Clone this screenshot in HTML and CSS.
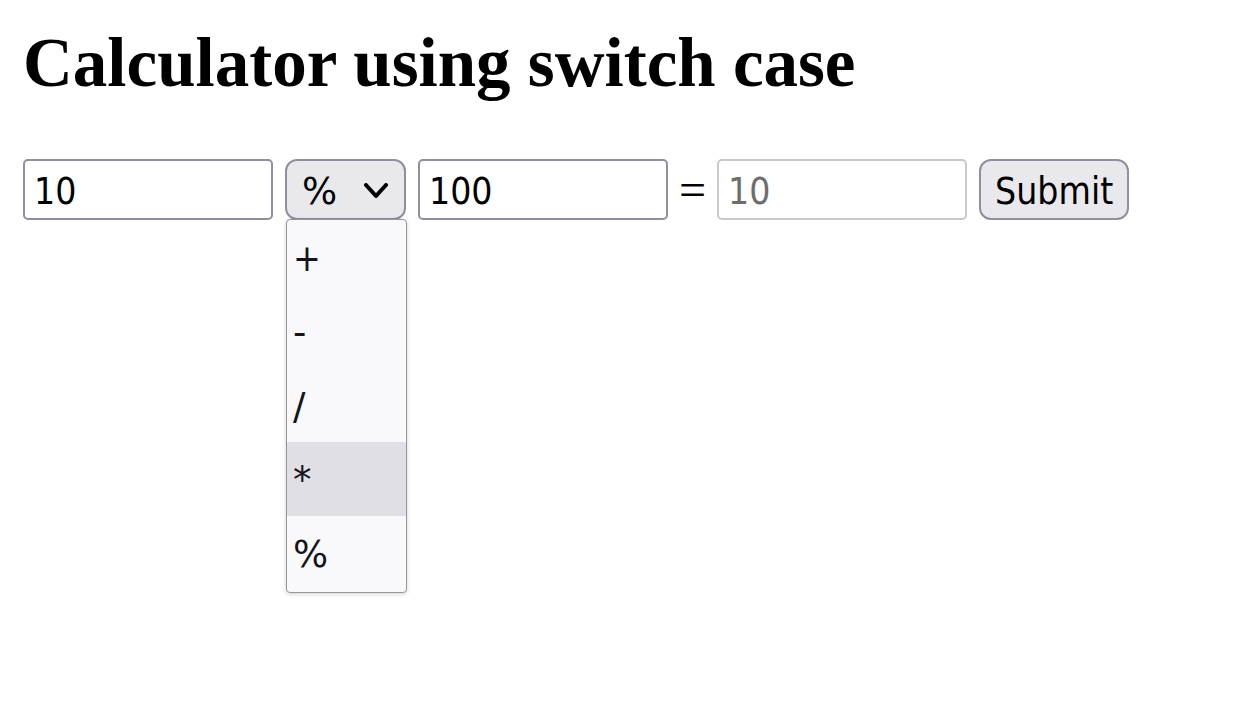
FILE: index.html
```
<!DOCTYPE html>
<html lang="en">
<head>
<meta charset="utf-8">
<title>Calculator using switch case</title>
<link rel="stylesheet" href="styles.css">
</head>
<body>
<h1 class="title">Calculator using switch case</h1>
<form class="calculator">
  <input class="field" type="text" value="10" aria-label="First number">
  <div class="operator">
    <select class="operator-select" aria-label="Operator">
      <option>+</option>
      <option>-</option>
      <option>/</option>
      <option>*</option>
      <option selected>%</option>
    </select>
    <svg class="chevron" viewBox="0 0 24 16" aria-hidden="true"><path d="M2 2 L12 13 L22 2"/></svg>
    <ul class="menu" role="listbox" aria-label="Operators">
      <li class="menu-item menu-item-narrow" role="option">+</li>
      <li class="menu-item" role="option">-</li>
      <li class="menu-item" role="option">/</li>
      <li class="menu-item menu-item-active" role="option">*</li>
      <li class="menu-item" role="option" aria-selected="true">%</li>
    </ul>
  </div>
  <input class="field" type="text" value="100" aria-label="Second number">
  <span class="equals">=</span>
  <input class="field field-result" type="text" value="10" aria-label="Result" disabled>
  <button class="submit" type="button">Submit</button>
</form>
</body>
</html>
```
FILE: styles.css
```
* {
  box-sizing: border-box;
}

body {
  min-height: 100vh;
  margin: 0;
  padding: 24px 23px;
  background: #fff;
  color: #000;
  font-family: "Liberation Serif", "Times New Roman", serif;
}

.title {
  margin: 0 0 57px;
  font-size: 69px;
  line-height: 78px;
  font-weight: bold;
}

.calculator {
  display: flex;
  align-items: center;
  gap: 12px;
}

.field,
.operator-select,
.submit {
  height: 61px;
  margin: 0;
  border: 2px solid #8f8f9d;
  color: #000;
  font-family: "DejaVu Sans Condensed", Tahoma, "DejaVu Sans", sans-serif;
  font-size: 37px;
  line-height: 44px;
}

.field {
  width: 250px;
  min-width: 0;
  padding: 4px 9px 0;
  border-radius: 5px;
  background: #fff;
}

.field-result {
  border-color: #c7c7ce;
  color: #6d6d6d;
}

.operator {
  position: relative;
  width: 121px;
}

.operator-select {
  display: block;
  width: 100%;
  padding: 4px 0 0 15px;
  border-radius: 12px;
  background: #e9e9ed;
  font-family: "DejaVu Sans", sans-serif;
  appearance: none;
}

.chevron {
  position: absolute;
  top: 24px;
  right: 18px;
  width: 24px;
  height: 16px;
  fill: none;
  stroke: #000;
  stroke-width: 4;
  stroke-linecap: round;
  stroke-linejoin: round;
  pointer-events: none;
}

.menu {
  position: absolute;
  top: 60px;
  left: 1px;
  width: 100%;
  margin: 0;
  padding: 0 0 2px;
  border: 1px solid #97979b;
  border-radius: 4px;
  background: #f9f9fb;
  box-shadow: 0 1px 4px rgba(0, 0, 0, 0.18);
  list-style: none;
}

.menu-item {
  height: 74px;
  padding: 4px 6px 0;
  color: #15141a;
  font-family: "DejaVu Sans", sans-serif;
  font-size: 37px;
  line-height: 70px;
}

.menu-item-active {
  background: #e0dfe6;
}

.menu-item-narrow {
  font-family: "DejaVu Sans Condensed", "DejaVu Sans", sans-serif;
}

.equals {
  margin: 0 -1px;
  font-size: 48px;
  line-height: 60px;
}

.submit {
  padding: 4px 14px 0;
  border-radius: 12px;
  background: #e9e9ed;
}
```
